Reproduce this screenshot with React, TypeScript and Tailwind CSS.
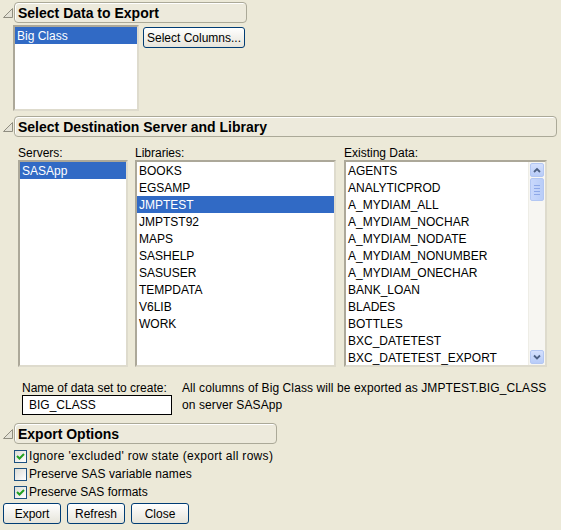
import React from "react";

const Tri = () => (
  <div className="w-[14px] h-full flex items-center pl-[3px]">
    <svg width="10" height="10" viewBox="0 0 10 10">
      <polygon points="9.5,0.5 9.5,9.5 0.5,9.5" fill="#E4E2D6" stroke="#8F8D80" strokeWidth="1" />
    </svg>
  </div>
);

const Header = ({ title, w }: { title: string; w: string }) => (
  <div className="flex h-[21px] items-center">
    <Tri />
    <div
      className={`${w} h-[21px] rounded-[4px] border border-[#ABA998] shadow-[inset_1px_1px_0_#fff] bg-[#EDEADC] flex items-center pl-[3px] font-bold text-[14px] leading-none`}
    >
      {title}
    </div>
  </div>
);

const ListBox = ({
  items,
  selected,
  cls,
}: {
  items: string[];
  selected?: number;
  cls: string;
}) => (
  <div
    className={`${cls} bg-white border-2 border-t-[#ACA899] border-l-[#ACA899] border-r-[#DEDBCD] border-b-[#DEDBCD] overflow-hidden`}
  >
    {items.map((it, i) => (
      <div
        key={it}
        className={`h-[17px] leading-[18px] pl-[2px] whitespace-nowrap ${
          i === selected ? "bg-[#316AC5] text-white" : ""
        }`}
      >
        {it}
      </div>
    ))}
  </div>
);

const XPButton = ({ label, w }: { label: string; w: string }) => (
  <div
    className={`${w} h-[21px] rounded-[3px] border border-[#003C74] bg-gradient-to-b from-white to-[#E6E4DA] flex items-center justify-center leading-none`}
  >
    {label}
  </div>
);

const Check = ({ on, label, cls = "" }: { on: boolean; label: string; cls?: string }) => (
  <div className="h-[18px] flex items-center">
    <div className="w-[13px] h-[13px] border border-[#1C5180] bg-gradient-to-br from-[#DCDCD6] to-white flex items-center justify-center">
      {on && (
        <svg width="11" height="11" viewBox="0 0 11 11">
          <path d="M2 5 L4.5 7.5 L9 3" fill="none" stroke="#21A121" strokeWidth="2" />
        </svg>
      )}
    </div>
    <span className={`ml-[2px] leading-none ${cls}`}>{label}</span>
  </div>
);

const ScrollBtn = ({ up }: { up: boolean }) => (
  <div className="w-[14px] h-[14px] rounded-[2px] border border-[#B3C7F3] bg-gradient-to-b from-[#D4E0FD] to-[#B8CCF8] flex items-center justify-center">
    <svg width="8" height="6" viewBox="0 0 8 6">
      <path
        d={up ? "M1 5 L4 2 L7 5" : "M1 1.5 L4 4.5 L7 1.5"}
        fill="none"
        stroke="#4D6185"
        strokeWidth="1.8"
      />
    </svg>
  </div>
);

const existing = [
  "AGENTS",
  "ANALYTICPROD",
  "A_MYDIAM_ALL",
  "A_MYDIAM_NOCHAR",
  "A_MYDIAM_NODATE",
  "A_MYDIAM_NONUMBER",
  "A_MYDIAM_ONECHAR",
  "BANK_LOAN",
  "BLADES",
  "BOTTLES",
  "BXC_DATETEST",
  "BXC_DATETEST_EXPORT",
];

const libs = [
  "BOOKS",
  "EGSAMP",
  "JMPTEST",
  "JMPTST92",
  "MAPS",
  "SASHELP",
  "SASUSER",
  "TEMPDATA",
  "V6LIB",
  "WORK",
];

export default function App() {
  return (
    <div className="w-[561px] h-[530px] overflow-hidden bg-[#ECE9D8] text-black text-[12px] font-['Liberation_Sans',Arial,sans-serif]">
      <div className="pt-[2px]">
        <Header title="Select Data to Export" w="w-[233px]" />
      </div>
      <div className="flex ml-[13px] mt-[2px]">
        <ListBox items={["Big Class"]} selected={0} cls="w-[126px] h-[86px]" />
        <div className="ml-[4px] mt-[2px]">
          <XPButton label="Select Columns..." w="w-[102px]" />
        </div>
      </div>

      <div className="mt-[5px]">
        <Header title="Select Destination Server and Library" w="w-[543px]" />
      </div>

      <div className="flex ml-[18px] mt-[8px]">
        <div className="w-[110px] flex flex-col">
          <div className="h-[14px] leading-[17px] mb-[1px]">Servers:</div>
          <ListBox items={["SASApp"]} selected={0} cls="w-[110px] h-[207px]" />
        </div>
        <div className="w-[201px] ml-[7px] flex flex-col">
          <div className="h-[14px] leading-[17px] mb-[1px]">Libraries:</div>
          <ListBox items={libs} selected={2} cls="w-[201px] h-[207px]" />
        </div>
        <div className="w-[203px] ml-[8px] flex flex-col">
          <div className="h-[14px] leading-[17px] mb-[1px]">Existing Data:</div>
          <div className="w-[203px] h-[207px] bg-white border-2 border-t-[#ACA899] border-l-[#ACA899] border-r-[#DEDBCD] border-b-[#DEDBCD] flex overflow-hidden">
            <div className="flex-1">
              {existing.map((it) => (
                <div key={it} className="h-[17px] leading-[18px] pl-[2px] whitespace-nowrap">
                  {it}
                </div>
              ))}
            </div>
            <div className="w-[17px] bg-[#F7F6F2] border-l border-[#EEEDE6] flex flex-col items-center pt-[1px] pb-[1px]">
              <ScrollBtn up />
              <div className="mt-[1px] w-[14px] h-[23px] rounded-[2px] border border-[#B3C7F3] bg-gradient-to-r from-[#C9D8FC] to-[#B9CDF8] flex flex-col items-center justify-center gap-[2px]">
                <div className="w-[6px] h-px bg-[#8EA8E8]" />
                <div className="w-[6px] h-px bg-[#8EA8E8]" />
                <div className="w-[6px] h-px bg-[#8EA8E8]" />
                <div className="w-[6px] h-px bg-[#8EA8E8]" />
              </div>
              <div className="flex-1" />
              <ScrollBtn up={false} />
            </div>
          </div>
        </div>
      </div>

      <div className="flex ml-[22px] mt-[14px]">
        <div className="flex flex-col">
          <div className="h-[14px] leading-[14px]">Name of data set to create:</div>
          <div className="w-[150px] h-[20px] border border-black bg-white flex items-center pl-[6px] leading-none">
            BIG_CLASS
          </div>
        </div>
        <div className="ml-[10px] -mt-[1px] leading-[17px] tracking-[0.1px]">
          <div>All columns of Big Class will be exported as JMPTEST.BIG_CLASS</div>
          <div>on server SASApp</div>
        </div>
      </div>

      <div className="mt-[8px]">
        <Header title="Export Options" w="w-[263px]" />
      </div>

      <div className="ml-[14px] mt-[3px] flex flex-col">
        <Check on label="Ignore 'excluded' row state (export all rows)" cls="tracking-[0.3px]" />
        <Check on={false} label="Preserve SAS variable names" cls="tracking-[0.1px]" />
        <Check on label="Preserve SAS formats" />
      </div>

      <div className="flex ml-[3px] mt-[2px] gap-[6px]">
        <XPButton label="Export" w="w-[58px]" />
        <XPButton label="Refresh" w="w-[58px]" />
        <XPButton label="Close" w="w-[58px]" />
      </div>
    </div>
  );
}
